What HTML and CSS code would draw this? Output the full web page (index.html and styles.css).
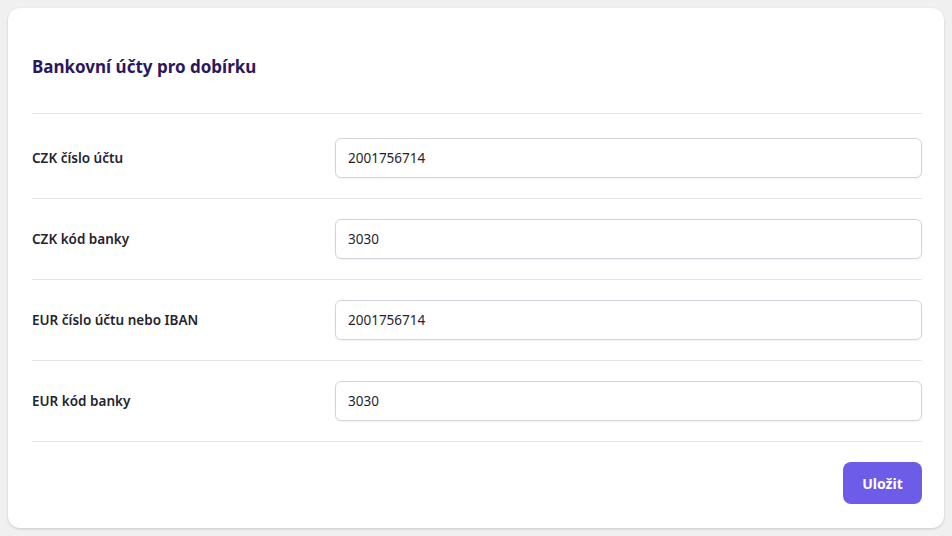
FILE: index.html
```html
<!DOCTYPE html>
<html lang="cs">
<head>
<meta charset="utf-8">
<title>Bankovní účty pro dobírku</title>
<link rel="stylesheet" href="styles.css">
</head>
<body>
<div class="card">
  <h2 class="title">Bankovní účty pro dobírku</h2>
  <div class="rows">
    <div class="row">
      <label class="label" for="f1">CZK číslo účtu</label>
      <input class="input" id="f1" type="text" value="2001756714">
    </div>
    <div class="row">
      <label class="label" for="f2">CZK kód banky</label>
      <input class="input" id="f2" type="text" value="3030">
    </div>
    <div class="row">
      <label class="label" for="f3">EUR číslo účtu nebo IBAN</label>
      <input class="input" id="f3" type="text" value="2001756714">
    </div>
    <div class="row">
      <label class="label" for="f4">EUR kód banky</label>
      <input class="input" id="f4" type="text" value="3030">
    </div>
  </div>
  <div class="actions">
    <button class="btn" type="button">Uložit</button>
  </div>
</div>
</body>
</html>
```

FILE: styles.css
```css
html, body {
  margin: 0;
  padding: 0;
  background: #f0f0f0;
}
body {
  padding: 8px;
  font-family: "Noto Sans", "Open Sans", sans-serif;
  color: #1f2430;
}
.card {
  background: #ffffff;
  border-radius: 12px;
  box-shadow: 0 1px 3px rgba(0,0,0,0.12), 0 1px 2px rgba(0,0,0,0.06);
  padding: 0 22px 24px 24px;
  height: 520px;
  box-sizing: border-box;
}
.title {
  margin: 0;
  padding: 47px 0 34px;
  font-size: 17px;
  line-height: 24px;
  font-weight: 700;
  color: #2b1760;
  border-bottom: 1px solid #e5e7eb;
}
.rows {
  padding-top: 4px;
}
.row {
  display: grid;
  grid-template-columns: 303px 1fr;
  align-items: center;
  padding: 20px 0;
  border-bottom: 1px solid #e5e7eb;
}
.label {
  font-size: 13.5px;
  font-weight: 600;
  color: #1f2430;
}
.input {
  height: 40px;
  box-sizing: border-box;
  border: 1px solid #d1d5db;
  border-radius: 6px;
  padding: 0 12px;
  font-family: inherit;
  font-size: 13.5px;
  color: #1f2430;
  background: #fff;
  box-shadow: 0 1px 2px rgba(0,0,0,0.05);
  width: 100%;
}
.actions {
  display: flex;
  justify-content: flex-end;
  padding-top: 20px;
}
.btn {
  width: 79px;
  height: 42px;
  border: none;
  border-radius: 8px;
  background: #6c5ce7;
  color: #ffffff;
  font-family: inherit;
  font-size: 14px;
  font-weight: 700;
}
```
